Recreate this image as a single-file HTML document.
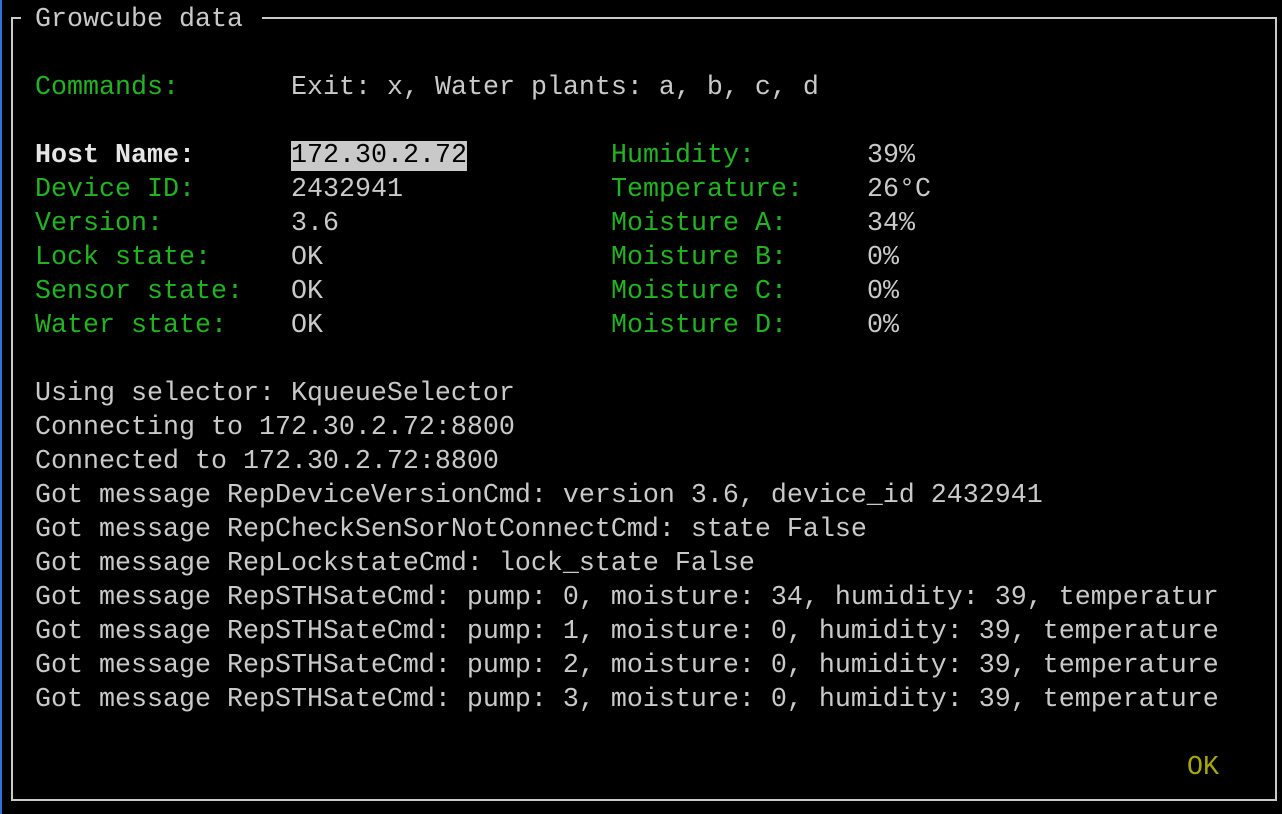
<!DOCTYPE html>
<html><head><meta charset="utf-8"><style>
html,body{margin:0;padding:0;background:#000;}
body{width:1282px;height:814px;position:relative;overflow:hidden;font-family:"Liberation Mono","DejaVu Sans Mono",monospace;font-size:26.67px;color:#c9c9c9;}
.r{position:absolute;left:35px;height:34px;line-height:34px;white-space:pre;}
.c1{left:291px}.c2{left:611px}.c3{left:867px}
.g{color:#22b322}.b{font-weight:bold;color:#e6e6e6}.y{color:#a7a700}
.hl{background:#c9c9c9;color:#000}
.box{position:absolute;left:11px;top:17px;width:1262px;height:780px;border:2px solid #c9c9c9;}
.gap{position:absolute;left:21px;top:10px;width:241px;height:16px;background:#000;}
.blue{position:absolute;left:0;top:0;width:2px;height:814px;background:#2f6fd6;}
</style></head><body>
<div class="blue"></div>
<div class="box"></div><div class="gap"></div>
<div class="r" style="top:3px">Growcube data</div>
<div class="r g" style="top:71px">Commands:</div><div class="r c1" style="top:71px">Exit: x, Water plants: a, b, c, d</div>

<div class="r b" style="top:139px">Host Name:</div><div class="r c1" style="top:139px"><span class="hl">172.30.2.72</span></div><div class="r c2 g" style="top:139px">Humidity:</div><div class="r c3" style="top:139px">39%</div>
<div class="r g" style="top:173px">Device ID:</div><div class="r c1" style="top:173px">2432941</div><div class="r c2 g" style="top:173px">Temperature:</div><div class="r c3" style="top:173px">26°C</div>
<div class="r g" style="top:207px">Version:</div><div class="r c1" style="top:207px">3.6</div><div class="r c2 g" style="top:207px">Moisture A:</div><div class="r c3" style="top:207px">34%</div>
<div class="r g" style="top:241px">Lock state:</div><div class="r c1" style="top:241px">OK</div><div class="r c2 g" style="top:241px">Moisture B:</div><div class="r c3" style="top:241px">0%</div>
<div class="r g" style="top:275px">Sensor state:</div><div class="r c1" style="top:275px">OK</div><div class="r c2 g" style="top:275px">Moisture C:</div><div class="r c3" style="top:275px">0%</div>
<div class="r g" style="top:309px">Water state:</div><div class="r c1" style="top:309px">OK</div><div class="r c2 g" style="top:309px">Moisture D:</div><div class="r c3" style="top:309px">0%</div>

<div class="r" style="top:377px">Using selector: KqueueSelector</div>
<div class="r" style="top:411px">Connecting to 172.30.2.72:8800</div>
<div class="r" style="top:445px">Connected to 172.30.2.72:8800</div>
<div class="r" style="top:479px">Got message RepDeviceVersionCmd: version 3.6, device_id 2432941</div>
<div class="r" style="top:513px">Got message RepCheckSenSorNotConnectCmd: state False</div>
<div class="r" style="top:547px">Got message RepLockstateCmd: lock_state False</div>
<div class="r" style="top:581px">Got message RepSTHSateCmd: pump: 0, moisture: 34, humidity: 39, temperatur</div>
<div class="r" style="top:615px">Got message RepSTHSateCmd: pump: 1, moisture: 0, humidity: 39, temperature</div>
<div class="r" style="top:649px">Got message RepSTHSateCmd: pump: 2, moisture: 0, humidity: 39, temperature</div>
<div class="r" style="top:683px">Got message RepSTHSateCmd: pump: 3, moisture: 0, humidity: 39, temperature</div>
<div class="r y" style="top:751px;left:1187px">OK</div>
</body></html>
